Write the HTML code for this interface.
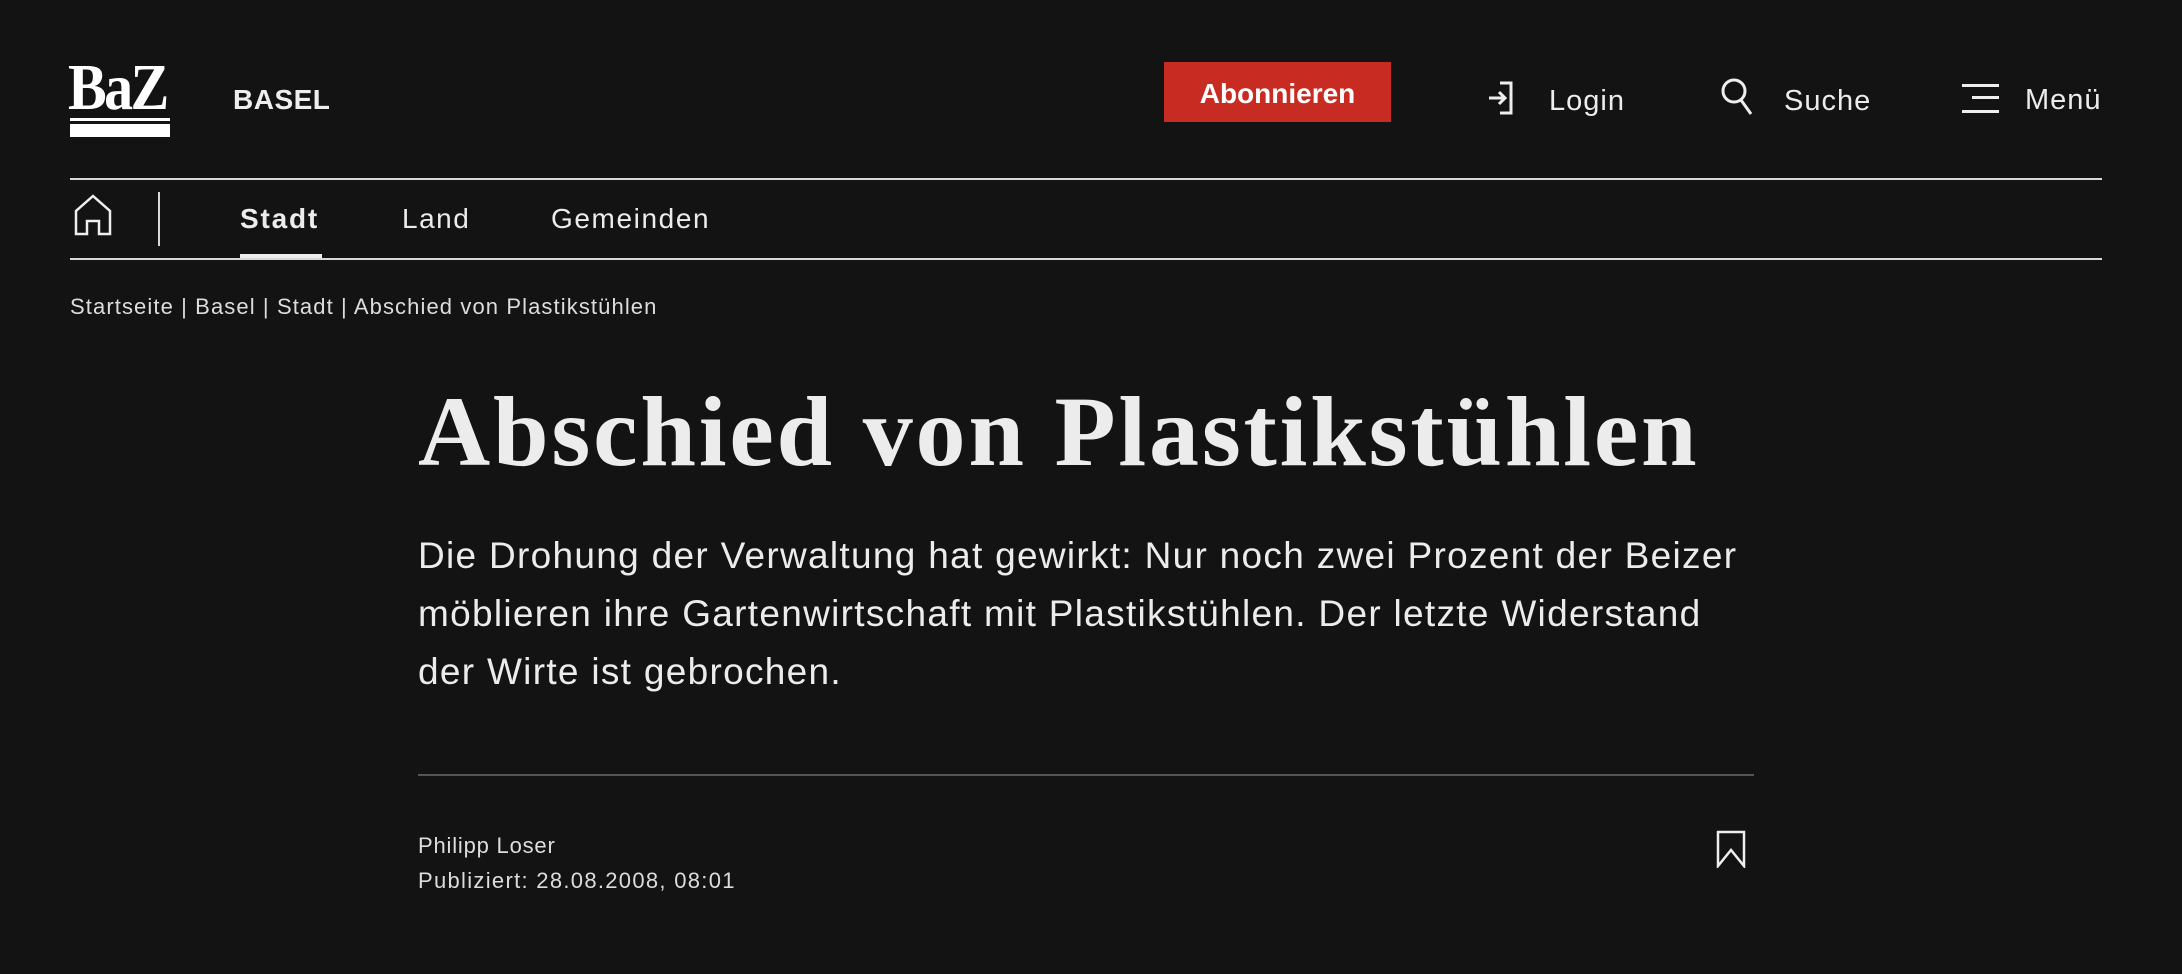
<!DOCTYPE html>
<html><head><meta charset="utf-8"><style>
*{margin:0;padding:0;box-sizing:border-box}
body{width:2182px;height:974px;background:#131313;color:#ececec;font-family:"Liberation Sans",sans-serif;position:relative;overflow:hidden}
.a{position:absolute;white-space:nowrap}
.rule{position:absolute;background:#d8d8d8}
</style></head><body>
<div class="a" style="left:68px;top:50px;font-family:'Liberation Serif',serif;font-weight:bold;font-size:66px;letter-spacing:-3px;color:#fff;transform:scaleX(0.88);transform-origin:left">BaZ</div>
<div class="rule" style="left:70px;top:118px;width:100px;height:3px;background:#fff"></div>
<div class="rule" style="left:70px;top:124px;width:100px;height:13px;background:#fff"></div>
<div class="a" style="left:233px;top:84px;font-size:28px;font-weight:bold;letter-spacing:0.5px;color:#eee">BASEL</div>

<div class="a" style="left:1164px;top:62px;width:227px;height:60px;background:#c82b22;color:#fff;font-weight:bold;font-size:28px;text-align:center;line-height:64px">Abonnieren</div>

<svg class="a" style="left:1488px;top:80px" width="36" height="36" viewBox="0 0 36 36" fill="none" stroke="#eee" stroke-width="3"><path d="M12 3h11v30h-11"/><path d="M1 18h15M11 12l6 6-6 6"/></svg>
<div class="a" style="left:1549px;top:85px;font-size:29px;letter-spacing:1px">Login</div>
<svg class="a" style="left:1720px;top:76px" width="40" height="40" viewBox="0 0 40 40" fill="none" stroke="#eee" stroke-width="3"><circle cx="14" cy="15" r="11"/><path d="M21 24l10 14"/></svg>
<div class="a" style="left:1784px;top:85px;font-size:29px;letter-spacing:1px">Suche</div>
<svg class="a" style="left:1962px;top:84px" width="37" height="30" viewBox="0 0 37 30" fill="#eee"><rect x="0" y="0" width="37" height="3"/><rect x="10" y="12" width="27" height="3"/><rect x="0" y="26" width="37" height="3"/></svg>
<div class="a" style="left:2025px;top:84px;font-size:29px;letter-spacing:1px">Menü</div>

<div class="rule" style="left:70px;top:178px;width:2032px;height:2px"></div>
<svg class="a" style="left:74px;top:194px" width="40" height="42" viewBox="0 0 40 42" fill="none" stroke="#eee" stroke-width="2.5"><path d="M2 40V17L19 2l17 15v23H25V27H13v13z"/></svg>
<div class="rule" style="left:158px;top:192px;width:2px;height:54px"></div>
<div class="a" style="left:240px;top:203px;font-size:28px;font-weight:bold;letter-spacing:1.8px">Stadt</div>
<div class="rule" style="left:240px;top:254px;width:82px;height:5px;background:#eee"></div>
<div class="a" style="left:402px;top:203px;font-size:28px;letter-spacing:1.5px">Land</div>
<div class="a" style="left:551px;top:203px;font-size:28px;letter-spacing:1.6px">Gemeinden</div>
<div class="rule" style="left:70px;top:258px;width:2032px;height:2px"></div>

<div class="a" style="left:70px;top:294px;font-size:22px;color:#ddd;letter-spacing:1.1px">Startseite | Basel | Stadt | Abschied von Plastikstühlen</div>

<div class="a" style="left:418px;top:374px;font-family:'Liberation Serif',serif;font-weight:bold;font-size:100px;color:#ececec;letter-spacing:2.8px">Abschied von Plastikstühlen</div>

<div class="a" style="left:418px;top:527px;font-size:37px;line-height:58px;color:#ececec;letter-spacing:1.3px">Die Drohung der Verwaltung hat gewirkt: Nur noch zwei Prozent der Beizer<br>möblieren ihre Gartenwirtschaft mit Plastikstühlen. Der letzte Widerstand<br>der Wirte ist gebrochen.</div>

<div class="rule" style="left:418px;top:774px;width:1336px;height:2px;background:#555"></div>
<div class="a" style="left:418px;top:833px;font-size:22px;color:#ddd;letter-spacing:0.8px">Philipp Loser</div>
<div class="a" style="left:418px;top:868px;font-size:22px;color:#ddd;letter-spacing:1.3px">Publiziert: 28.08.2008, 08:01</div>
<svg class="a" style="left:1716px;top:830px" width="30" height="38" viewBox="0 0 30 38" fill="none" stroke="#eee" stroke-width="2.5"><path d="M2 2h26v34L15 20 2 36z"/></svg>
</body></html>
